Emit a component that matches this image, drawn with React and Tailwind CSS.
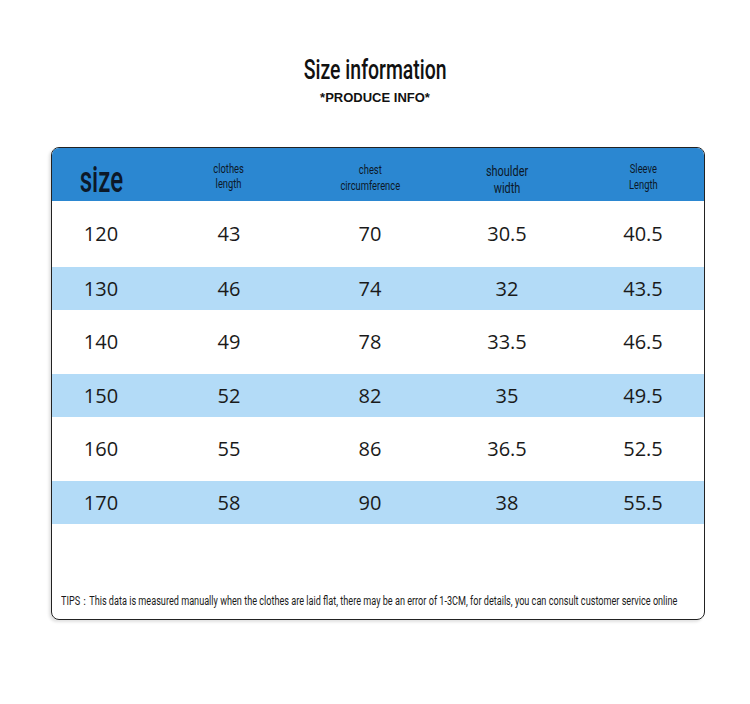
import React from "react";

const rows = [
  ["120", "43", "70", "30.5", "40.5"],
  ["130", "46", "74", "32", "43.5"],
  ["140", "49", "78", "33.5", "46.5"],
  ["150", "52", "82", "35", "49.5"],
  ["160", "55", "86", "36.5", "52.5"],
  ["170", "58", "90", "38", "55.5"],
];

const cols = "grid grid-cols-[98px_158px_124px_150px_122px]";

export default function App() {
  return (
    <div className="w-[750px] h-[704px] bg-white flex flex-col items-center font-['Roboto',sans-serif]">
      {/* ── Title ── */}
      <div className="pt-[55px] flex flex-col items-center">
        <div className="inline-block scale-x-[0.72] text-[27px] leading-[30px] font-medium text-[#111]">
          Size information
        </div>
        <div className="mt-[5px] text-[13px] leading-[16px] font-bold text-[#111] font-['Liberation_Sans',sans-serif]">
          *PRODUCE INFO*
        </div>
      </div>

      {/* ── Card ── */}
      <div className="mt-[41px] ml-[6px] w-[654px] h-[473px] border border-[#222] rounded-[8px] overflow-hidden flex flex-col shadow-[-2px_2px_3px_rgba(0,0,0,0.12)]">
        <div className={`${cols} h-[53px] bg-[#2b87d1] text-[#0c1828] items-center text-center`}>
          <div className="pt-[12px]">
            <span className="inline-block scale-x-[0.67] text-[36px] font-medium leading-none">size</span>
          </div>
          <div className="pt-[8px]">
            <span className="inline-block scale-x-[0.78] text-[12px] leading-[15px]">clothes<br />length</span>
          </div>
          <div className="pt-[9px]">
            <span className="inline-block scale-x-[0.78] text-[12px] leading-[16px]">chest<br />circumference</span>
          </div>
          <div className="pt-[13px]">
            <span className="inline-block scale-x-[0.78] text-[14px] leading-[17px]">shoulder<br />width</span>
          </div>
          <div className="pt-[7px]">
            <span className="inline-block scale-x-[0.78] text-[12px] leading-[16px]">Sleeve<br />Length</span>
          </div>
        </div>

        {rows.map((r, i) => (
          <div
            key={r[0]}
            className={`${cols} items-center text-center text-[20px] text-[#1a1a1a] ${
              i % 2 ? "bg-[#b3dbf7] h-[43px]" : i === 0 ? "h-[66px]" : "h-[64px]"
            } font-['Open_Sans',sans-serif]`}
          >
            {r.map((c, j) => (
              <div key={j}>{c}</div>
            ))}
          </div>
        ))}

        <div className="flex-1 flex items-end pb-[11px] pl-[9px]">
          <div className="inline-block origin-left scale-x-[0.76] whitespace-nowrap text-[12px] leading-[14px] text-[#1a1a1a]">
            TIPS：This data is measured manually when the clothes are laid flat, there may be an error of 1-3CM, for details, you can consult customer service online
          </div>
        </div>
      </div>
    </div>
  );
}
